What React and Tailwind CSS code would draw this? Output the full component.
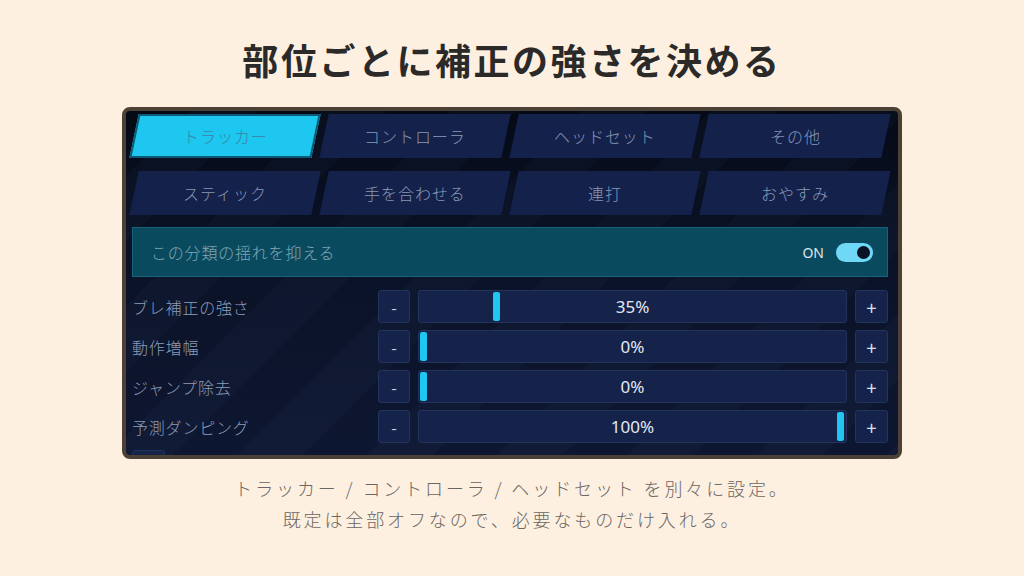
import React, { useState } from "react";

const TABS = [
  "トラッカー",
  "コントローラ",
  "ヘッドセット",
  "その他",
  "スティック",
  "手を合わせる",
  "連打",
  "おやすみ",
];

const SLIDERS = [
  { label: "ブレ補正の強さ", value: "35%", pos: 0.175 },
  { label: "動作増幅", value: "0%", pos: 0 },
  { label: "ジャンプ除去", value: "0%", pos: 0 },
  { label: "予測ダンピング", value: "100%", pos: 1 },
];

const jp = { fontFamily: '"Noto Sans CJK JP", "Noto Sans", sans-serif' };

const SliderRow = ({ label, value, pos }) => (
  <div className="flex items-center h-[33px] shrink-0">
    <div className="w-[238px] text-[16px] font-light tracking-[0.05em] text-[#8d9cba]">{label}</div>
    <button className="ml-2 w-[32px] h-[33px] rounded-[3px] bg-[#15234a] border border-[#22335e] text-[#c9d3e6] text-[16px] leading-none">
      -
    </button>
    <div className="relative ml-2 flex-1 h-[33px] rounded-[3px] bg-[#15234a] border border-[#22335e] flex items-center justify-center">
      <span
        className="text-[17px] text-[#e3e8f2]"
        style={{ fontFamily: '"Noto Sans", sans-serif' }}
      >
        {value}
      </span>
      <div
        className="absolute top-[1px] w-[7px] h-[29px] rounded-[2px] bg-[#1fc6ef]"
        style={{ left: `calc(${pos} * (100% - 10px) + 1px)` }}
      />
    </div>
    <button className="ml-2 w-[33px] h-[33px] rounded-[3px] bg-[#15234a] border border-[#22335e] text-[#dfe5f0] text-[18px] leading-none">
      +
    </button>
  </div>
);

export default function App() {
  const [active, setActive] = useState(0);
  const [on, setOn] = useState(true);

  return (
    <div className="w-[1024px] h-[576px] bg-[#fdf0e1] flex flex-col items-center" style={jp}>
      <h1 className="pt-[34px] text-[36px] leading-[50px] font-bold tracking-[0.07em] text-[#2b2a29]">
        部位ごとに補正の強さを決める
      </h1>

      <div className="mt-[23px] w-[780px] h-[352px] rounded-[8px] border-4 border-[#4b4135] overflow-hidden bg-[image:repeating-linear-gradient(135deg,rgba(255,255,255,0)_0px,rgba(255,255,255,0)_46px,rgba(120,150,220,0.03)_46px,rgba(120,150,220,0.03)_92px),linear-gradient(to_bottom,#050a16_0%,#0a1226_40%,#0e1731_100%)]">
        <div className="h-full pl-[6px] pr-[10px] pt-[3px] flex flex-col">
          <div className="grid grid-cols-4 gap-x-2 gap-y-[13px] px-[2px]">
            {TABS.map((t, i) => (
              <button
                key={t}
                onClick={() => setActive(i)}
                className={
                  i === active
                    ? "-skew-x-12 h-[44px] bg-[#1dc7f0] border-2 border-[#0d5a76] flex items-center justify-center"
                    : "-skew-x-12 h-[44px] bg-[#14214a] flex items-center justify-center"
                }
              >
                <span
                  className={
                    i === active
                      ? "skew-x-12 text-[16px] font-light tracking-[0.06em] text-[#3d83a5]"
                      : "skew-x-12 text-[16px] font-light tracking-[0.06em] text-[#8698b8]"
                  }
                >
                  {t}
                </span>
              </button>
            ))}
          </div>

          <div className="mt-[12px] h-[50px] shrink-0 bg-[#0a4a5e] border border-[#16627a] flex items-center justify-between pl-[18px] pr-[14px]">
            <span className="text-[16px] font-light tracking-[0.05em] text-[#7fa6b8]">この分類の揺れを抑える</span>
            <div className="flex items-center gap-[12px]">
              <span
                className="text-[14px] text-[#dde7ee]"
                style={{ fontFamily: '"Noto Sans", sans-serif' }}
              >
                {on ? "ON" : "OFF"}
              </span>
              <button
                onClick={() => setOn(!on)}
                className="w-[37px] h-[19px] rounded-full bg-[#6fd8f6] flex items-center justify-end pr-[3px]"
              >
                <span className="w-[13px] h-[13px] rounded-full bg-[#0a1224]" />
              </button>
            </div>
          </div>

          <div className="mt-[13px] flex flex-col gap-[7px]">
            {SLIDERS.map((s) => (
              <SliderRow key={s.label} {...s} />
            ))}
            <div className="w-[33px] h-[33px] shrink-0 rounded-[3px] bg-[#15234a] border border-[#22335e]" />
          </div>
        </div>
      </div>

      <div className="mt-[14px] text-center text-[18px] font-light leading-[31px] tracking-[0.16em] text-[#6b6661]">
        <p>トラッカー / コントローラ / ヘッドセット を別々に設定。</p>
        <p>既定は全部オフなので、必要なものだけ入れる。</p>
      </div>
    </div>
  );
}
